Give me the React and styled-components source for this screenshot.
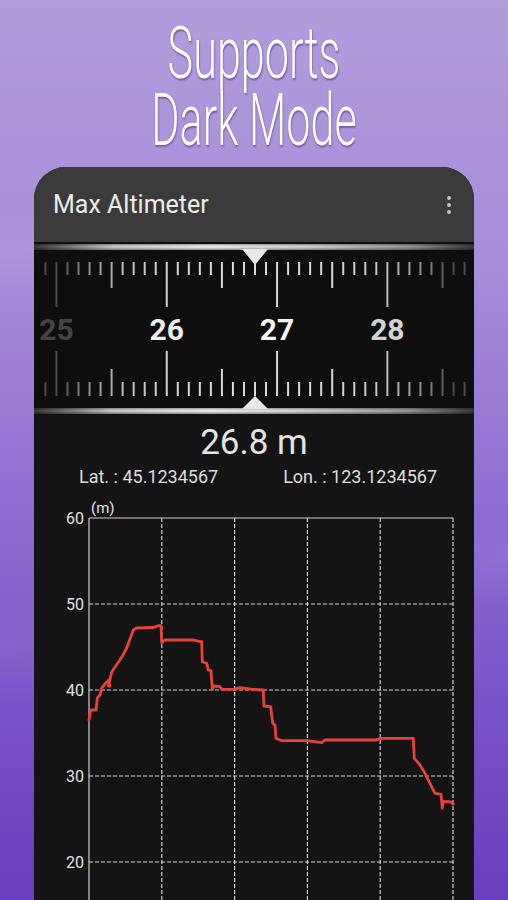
import React from "react"
import styled, { createGlobalStyle } from "styled-components"

const GlobalStyle = createGlobalStyle`
    html, body {
        margin: 0;
        padding: 0;
        background: #8a6bd0;
    }
    * {
        box-sizing: border-box;
    }
`

const Page = styled.div`
    width: 508px;
    height: 900px;
    overflow: hidden;
    display: flex;
    flex-direction: column;
    align-items: center;
    padding-top: 20px;
    background:
        radial-gradient(ellipse 420px 60px at 30px 250px, rgba(255, 255, 255, 0.07), transparent 70%),
        radial-gradient(ellipse 400px 70px at 520px 560px, rgba(255, 255, 255, 0.06), transparent 70%),
        radial-gradient(ellipse 380px 80px at 0px 650px, rgba(255, 255, 255, 0.05), transparent 70%),
        linear-gradient(180deg, #b19ddc 0%, #a68dd9 30%, #916fd2 55%, #7a52c8 78%, #6a3ec0 100%);
    font-family: Roboto, "Liberation Sans", Arial, sans-serif;
`

const Title = styled.h1`
    margin: 0;
    width: 100%;
    font-family: Roboto, "Liberation Sans", sans-serif;
    font-weight: 300;
    font-size: 72px;
    line-height: 67px;
    color: #ffffff;
    text-align: center;
    transform: scaleX(0.6);
    text-shadow: 1px 2px 2px rgba(60, 30, 110, 0.45), 0 0 1px rgba(80, 60, 120, 0.6);
`

const Phone = styled.div`
    margin-top: 13px;
    width: 440px;
    flex: 1;
    background: #141414;
    border-radius: 32px 32px 0 0;
    overflow: hidden;
    display: flex;
    flex-direction: column;
`

const Header = styled.div`
    height: 75px;
    flex-shrink: 0;
    background: #3b3b3b;
    display: flex;
    align-items: center;
    justify-content: space-between;
    padding: 0 23px 0 19px;
`

const AppTitle = styled.div`
    font-size: 25px;
    color: #ececec;
`

const Overflow = styled.div`
    display: flex;
    flex-direction: column;
    gap: 3px;
    span {
        width: 4px;
        height: 4px;
        border-radius: 50%;
        background: #c4c4c4;
    }
`

const RulerSvg = styled.svg`
    display: block;
    flex-shrink: 0;
`

const Reading = styled.div`
    margin-top: 8px;
    text-align: center;
    font-size: 35px;
    line-height: 40px;
    color: #e4e4e4;
`

const Coords = styled.div`
    margin-top: 4px;
    display: flex;
    justify-content: space-between;
    padding: 0 37px 0 45px;
    font-size: 18px;
    line-height: 20px;
    color: #dedede;
`

const ChartSvg = styled.svg`
    display: block;
    flex-shrink: 0;
`

const CENTER = 255
const UNIT = 110.3
const VALUE = 26.8

const fade = (x, min) => {
    const d = Math.abs(x - CENTER) / 212
    return Math.max(min, 1 - Math.pow(d, 4))
}

const Ruler = () => {
    const ticks = []
    for (let n = 248; n <= 288; n++) {
        const x = CENTER + (n / 10 - VALUE) * UNIT
        if (x < 36 || x > 472) continue
        const major = n % 10 === 0
        const medium = !major && n % 5 === 0
        const topEnd = major ? 307 : medium ? 288 : 275
        const botStart = major ? 351 : medium ? 369 : 382
        ticks.push({ n, x, topEnd, botStart, major, op: fade(x, 0.3) })
    }
    return (
        <RulerSvg width="440" height="173" viewBox="34 242 440 173">
            <defs>
                <linearGradient id="bar" x1="0" x2="1" y1="0" y2="0">
                    <stop offset="0" stopColor="#3a3a3a" />
                    <stop offset="0.18" stopColor="#cfcfcf" />
                    <stop offset="0.4" stopColor="#f4f4f4" />
                    <stop offset="0.62" stopColor="#d8d8d8" />
                    <stop offset="0.85" stopColor="#9a9a9a" />
                    <stop offset="1" stopColor="#3a3a3a" />
                </linearGradient>
                <linearGradient id="shade" x1="0" x2="0" y1="0" y2="1">
                    <stop offset="0" stopColor="#000" stopOpacity="0.35" />
                    <stop offset="0.45" stopColor="#000" stopOpacity="0" />
                    <stop offset="1" stopColor="#000" stopOpacity="0.4" />
                </linearGradient>
            </defs>
            <rect x="34" y="242" width="440" height="173" fill="#0e0e0e" />
            <rect x="34" y="244" width="440" height="6" fill="url(#bar)" />
            <rect x="34" y="244" width="440" height="6" fill="url(#shade)" />
            <rect x="34" y="408" width="440" height="6" fill="url(#bar)" />
            <rect x="34" y="408" width="440" height="6" fill="url(#shade)" />
            {ticks.map(t => (
                <g key={t.n} stroke="#dadada" strokeWidth="2" opacity={t.op}>
                    <line x1={t.x} x2={t.x} y1="262" y2={t.topEnd} />
                    <line x1={t.x} x2={t.x} y1={t.botStart} y2="396" />
                </g>
            ))}
            {ticks.filter(t => t.major).map(t => (
                <text
                    key={"l" + t.n}
                    x={t.x}
                    y="340"
                    textAnchor="middle"
                    fontFamily="Roboto, 'Liberation Sans', sans-serif"
                    fontWeight="700"
                    fontSize="30"
                    fill="#f6f6f6"
                    opacity={fade(t.x, 0.12)}
                >
                    {t.n / 10}
                </text>
            ))}
            <polygon points="242,249 268,249 255,265" fill="#e8e8e8" />
            <polygon points="242,409 268,409 255,396" fill="#e8e8e8" />
        </RulerSvg>
    )
}

const PLOT_LEFT = 89
const PLOT_RIGHT = 453
const PLOT_TOP = 518
const PER_TEN = 86

const track = [
    [89, 720], [90.7, 710], [96, 710], [97.3, 698], [100, 695], [101.7, 688], [106, 683],
    [108.3, 680], [110, 686], [108.5, 686], [111.7, 672], [115, 667], [120, 660], [123, 655],
    [126.7, 648], [130, 639], [133.3, 630], [136.7, 628], [153.3, 627.5], [158.3, 625.7],
    [161, 625.7], [161.7, 642.7], [165, 640], [193.3, 640], [200, 641.7], [201.7, 641.7],
    [202.3, 661.7], [206.7, 663.3], [208.3, 670], [211, 670.7], [212.3, 689.3], [213.3, 686],
    [220, 686.7], [221.7, 689.3], [233.3, 689.3], [240, 687.7], [253.3, 689.3], [263.3, 690],
    [264, 706], [270.7, 706.7], [272.7, 723.3], [275, 725], [276, 738.3], [281.7, 740.7],
    [306.7, 740.7], [321.7, 742.7], [325, 740], [376.7, 740], [380, 738.3], [413.3, 738.3],
    [414.3, 758.3], [420, 765], [425, 773.3], [430, 783.3], [435, 793.3], [441, 794.3],
    [442.3, 808.3], [443.3, 801.7], [450, 801.7], [453.3, 804],
]

const Chart = () => {
    const levels = [60, 50, 40, 30, 20]
    const cols = [1, 2, 3, 4].map(k => PLOT_LEFT + (k * (PLOT_RIGHT - PLOT_LEFT)) / 5)
    const yOf = v => PLOT_TOP + ((60 - v) / 10) * PER_TEN
    return (
        <ChartSvg width="440" height="413" viewBox="34 487 440 413">
            <g fontFamily="Roboto, 'Liberation Sans', sans-serif" fill="#e2e2e2">
                <text x="91" y="513" fontSize="15">(m)</text>
                {levels.map(v => (
                    <text key={v} x="84" y={yOf(v) + 6} fontSize="16" textAnchor="end">
                        {v}
                    </text>
                ))}
            </g>
            <g stroke="#cfcfcf" strokeWidth="1.2" fill="none">
                {levels.slice(1).map(v => (
                    <line key={v} x1={PLOT_LEFT} x2={PLOT_RIGHT} y1={yOf(v)} y2={yOf(v)} strokeDasharray="4 2" />
                ))}
                {cols.map(x => (
                    <line key={x} x1={x} x2={x} y1={PLOT_TOP} y2="910" strokeDasharray="4 2" />
                ))}
                <line x1={PLOT_RIGHT} x2={PLOT_RIGHT} y1={PLOT_TOP} y2="910" strokeDasharray="4 2" />
                <line x1={PLOT_LEFT} x2={PLOT_RIGHT} y1={PLOT_TOP} y2={PLOT_TOP} />
                <line x1={PLOT_LEFT} x2={PLOT_LEFT} y1={PLOT_TOP} y2="910" />
            </g>
            <polyline
                points={track.map(p => p.join(",")).join(" ")}
                fill="none"
                stroke="#e8423a"
                strokeWidth="2.8"
                strokeLinejoin="round"
                strokeLinecap="round"
            />
        </ChartSvg>
    )
}

const App = () => {
    return (
        <Page>
            <GlobalStyle />
            <Title>
                Supports
                <br />
                Dark Mode
            </Title>
            <Phone>
                <Header>
                    <AppTitle>Max Altimeter</AppTitle>
                    <Overflow>
                        <span />
                        <span />
                        <span />
                    </Overflow>
                </Header>
                <Ruler />
                <Reading>26.8 m</Reading>
                <Coords>
                    <span>Lat. : 45.1234567</span>
                    <span>Lon. : 123.1234567</span>
                </Coords>
                <Chart />
            </Phone>
        </Page>
    )
}

export default App
